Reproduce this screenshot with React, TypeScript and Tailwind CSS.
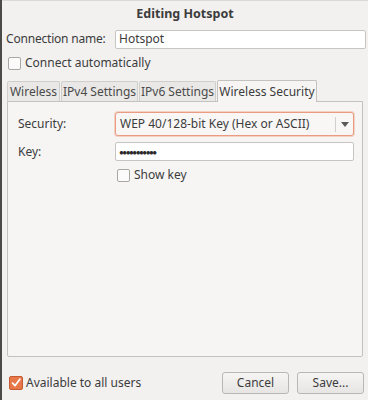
import { useState } from 'react'

function Check({ checked }: { checked?: boolean }) {
  if (checked) {
    return (
      <span className="w-[14px] h-[14px] shrink-0 rounded-[2px] bg-[#e8774a] border border-[#c65a30] flex items-center justify-center">
        <svg viewBox="0 0 14 14" className="w-[14px] h-[14px]">
          <path d="M3 7.2 L6 10 L11.5 2.5" stroke="#ffffff" strokeWidth="2" fill="none" strokeLinecap="round" strokeLinejoin="round" />
        </svg>
      </span>
    )
  }
  return <span className="w-[13px] h-[13px] shrink-0 rounded-[2px] bg-[#fbfbfb] border border-[#a9a7a4]" />
}

export default function App() {
  const [tab] = useState('Wireless Security')
  const tabs = [
    { name: 'Wireless', w: 'w-[53px]' },
    { name: 'IPv4 Settings', w: 'w-[77px]' },
    { name: 'IPv6 Settings', w: 'w-[77px]' },
    { name: 'Wireless Security', w: 'w-[100px]' },
  ]

  return (
    <div className="w-[368px] h-[400px] bg-[#f2f1f0] text-[#3c3c3c] text-[12px] whitespace-nowrap flex flex-col border-l-2 border-[#4a4a48] overflow-hidden" style={{ fontFamily: '"Noto Sans", "Open Sans", sans-serif' }}>
      {/* title */}
      <div className="h-[27px] flex items-center justify-center font-bold text-[12.5px] text-[#3c3c3c] border-t border-[#dcdad7]">
        Editing Hotspot
      </div>

      {/* connection name */}
      <div className="flex items-center h-[20px] mt-[2px] pl-[4px] pr-[2px]">
        <span className="w-[109px] shrink-0 tracking-[-0.2px]">Connection name:</span>
        <div className="flex-1 h-[19px] bg-white border border-[#c7c5c2] rounded-[2px] flex items-center pl-[3px] text-[#3c3c3c]">
          Hotspot
        </div>
      </div>

      {/* connect automatically */}
      <div className="flex items-center gap-[4px] h-[20px] mt-[4px] pl-[6px]">
        <Check />
        <span>Connect automatically</span>
      </div>

      {/* tabs */}
      <div className="flex items-end h-[22px] mt-[6px] pl-[5px]">
        {tabs.map((t) => {
          const active = t.name === tab
          return (
            <div
              key={t.name}
              className={
                active
                  ? `${t.w} h-[22px] bg-[#f6f5f4] border border-b-0 border-[#c4c2bf] rounded-t-[2px] flex items-center justify-center -mb-px relative z-10`
                  : `${t.w} h-[20px] bg-[#e9e8e6] border border-b-0 border-[#d0cecb] rounded-t-[2px] flex items-center justify-center mr-px text-[#4a4a4a]`
              }
            >
              {t.name}
            </div>
          )
        })}
      </div>

      {/* panel */}
      <div className="ml-[5px] w-[356px] h-[256px] bg-[#f6f5f4] border border-[#c4c2bf] rounded-b-[2px] flex flex-col pt-[10px] pl-[10px] pr-[8px]">
        <div className="flex items-center h-[24px]">
          <span className="w-[97px] shrink-0">Security:</span>
          <div className="flex-1 h-[24px] bg-[#f8f7f6] border border-[#eb9b82] rounded-[3px] shadow-[0_0_0_1px_#f5d2c6] flex items-center">
            <span className="flex-1 pl-[4px]">WEP 40/128-bit Key (Hex or ASCII)</span>
            <span className="w-px h-[15px] bg-[#d2d0cd]" />
            <span className="w-[17px] flex items-center justify-center">
              <svg viewBox="0 0 8 5" className="w-[8px] h-[5px]">
                <path d="M0 0 H8 L4 5 Z" fill="#5a5a5a" />
              </svg>
            </span>
          </div>
        </div>

        <div className="flex items-center h-[19px] mt-[6px]">
          <span className="w-[97px] shrink-0">Key:</span>
          <div className="flex-1 h-[19px] bg-white border border-[#c7c5c2] rounded-[2px] flex items-center pl-[3px] text-[#2a2a2a] text-[8px] tracking-[-1.5px]">
            ●●●●●●●●●●●
          </div>
        </div>

        <div className="flex items-center gap-[4px] h-[20px] mt-[4px] pl-[99px]">
          <Check />
          <span>Show key</span>
        </div>
      </div>

      {/* footer */}
      <div className="flex items-center mt-[15px] pl-[7px] pr-[4px]">
        <div className="flex items-center gap-[3px] flex-1">
          <Check checked />
          <span>Available to all users</span>
        </div>
        <button className="w-[67px] h-[22px] border border-[#b9b7b4] rounded-[3px] bg-gradient-to-b from-[#f6f5f4] to-[#e6e5e3] text-[#3c3c3c] mr-[8px]">
          Cancel
        </button>
        <button className="w-[67px] h-[22px] border border-[#b9b7b4] rounded-[3px] bg-gradient-to-b from-[#f6f5f4] to-[#e6e5e3] text-[#3c3c3c]">
          Save...
        </button>
      </div>
    </div>
  )
}
